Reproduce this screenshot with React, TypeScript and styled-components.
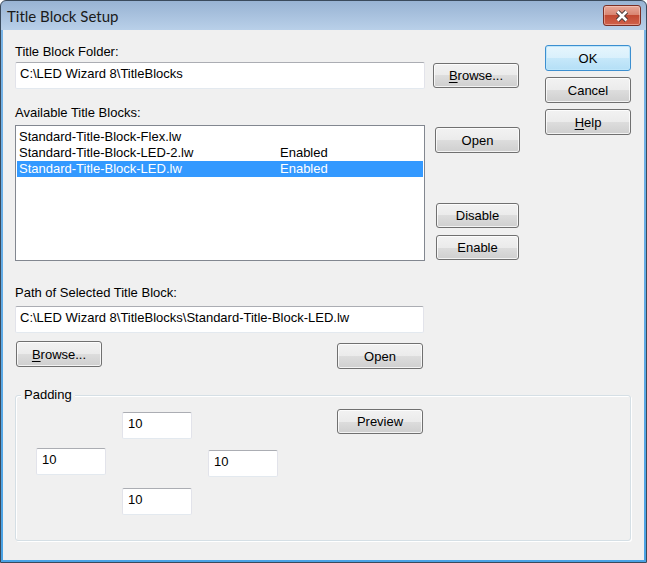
import React from "react";
import styled, { createGlobalStyle, css } from "styled-components";

const GlobalStyle = createGlobalStyle`
  html, body {
    margin: 0;
    padding: 0;
    background: #ffffff;
  }
  body {
    font-family: "Liberation Sans", Arial, sans-serif;
    font-size: 13px;
    color: #000;
  }
`;

const blocks = [
  { name: "Standard-Title-Block-Flex.lw", status: "" },
  { name: "Standard-Title-Block-LED-2.lw", status: "Enabled" },
  { name: "Standard-Title-Block-LED.lw", status: "Enabled", selected: true },
];

export default function App() {
  return (
    <>
      <GlobalStyle />
      <Window>
        <TitleBar>
          <Caption>Title Block Setup</Caption>
          <CloseButton aria-label="Close">
            <svg width="14" height="12" viewBox="0 0 14 12">
              <path d="M2.5 1.5 L11.5 10.5 M11.5 1.5 L2.5 10.5" stroke="#4b3b3a" strokeWidth="4.6" />
              <path d="M2.5 1.5 L11.5 10.5 M11.5 1.5 L2.5 10.5" stroke="#ffffff" strokeWidth="2.6" />
            </svg>
          </CloseButton>
        </TitleBar>

        <Client>
          <TopSection>
            <LeftColumn>
              <Label>Title Block Folder:</Label>
              <Row $mt={2}>
                <TextBox $w={410} readOnly value="C:\LED Wizard 8\TitleBlocks" />
                <Button $w={86} $h={25} $mt={1} $ml={8}>
                  <u>B</u>rowse...
                </Button>
              </Row>

              <Label $mt={16}>Available Title Blocks:</Label>
              <Row $mt={4}>
                <ListBox>
                  {blocks.map((b) => (
                    <ListItem key={b.name} $selected={!!b.selected}>
                      <span>{b.name}</span>
                      <span>{b.status}</span>
                    </ListItem>
                  ))}
                </ListBox>
                <ButtonColumn>
                  <Button $w={85} $h={26} $mt={2}>Open</Button>
                  <Button $w={83} $h={25} $mt={50} $ml={1}>Disable</Button>
                  <Button $w={83} $h={25} $mt={7} $ml={1}>Enable</Button>
                </ButtonColumn>
              </Row>

              <Label $mt={24}>Path of Selected Title Block:</Label>
              <Row $mt={5}>
                <TextBox
                  $w={409}
                  readOnly
                  value="C:\LED Wizard 8\TitleBlocks\Standard-Title-Block-LED.lw"
                />
              </Row>
              <Row $mt={8}>
                <Button $w={86} $h={26} $ml={1}>
                  <u>B</u>rowse...
                </Button>
                <Button $w={86} $h={26} $mt={2} $ml={235}>Open</Button>
              </Row>
            </LeftColumn>

            <RightColumn>
              <Button $w={86} $h={26} $default>OK</Button>
              <Button $w={86} $h={26}>Cancel</Button>
              <Button $w={86} $h={26}>
                <u>H</u>elp
              </Button>
            </RightColumn>
          </TopSection>

          <GroupBox>
            <GroupTitle>Padding</GroupTitle>
            <PaddingGrid>
              <PadBox $col={2} $row={1} $mt={3} readOnly value="10" />
              <PadBox $col={1} $row={2} readOnly value="10" />
              <PadBox $col={3} $row={2} $mt={2} readOnly value="10" />
              <PadBox $col={2} $row={3} readOnly value="10" />
              <PreviewCell>
                <Button $w={86} $h={25}>Preview</Button>
              </PreviewCell>
            </PaddingGrid>
          </GroupBox>
        </Client>
      </Window>
    </>
  );
}

const Window = styled.div`
  width: 647px;
  height: 563px;
  box-sizing: border-box;
  border: 1px solid #3a4a5c;
  border-radius: 6px 6px 0 0;
  background: linear-gradient(
    to bottom,
    #98b3d3 0px,
    #b9d0e9 29px,
    #79b4e6 29px,
    #4aa2e4 100%
  );
  display: flex;
  flex-direction: column;
  overflow: hidden;
`;

const TitleBar = styled.div`
  height: 29px;
  flex: none;
  display: flex;
  align-items: center;
  justify-content: space-between;
  padding: 0 5px 0 6px;
`;

const Caption = styled.div`
  font-family: Lato, "Liberation Sans", sans-serif;
  font-size: 15px;
  font-weight: 400;
  color: #1a1a1a;
`;

const CloseButton = styled.div`
  width: 38px;
  height: 21px;
  box-sizing: border-box;
  border: 1px solid #7a2f25;
  border-radius: 3px;
  background: linear-gradient(
    to bottom,
    #e8a899 0%,
    #d98672 45%,
    #c24a33 50%,
    #d0614a 100%
  );
  box-shadow: inset 0 0 0 1px rgba(255, 220, 210, 0.45);
  display: flex;
  align-items: center;
  justify-content: center;
`;

const Client = styled.div`
  flex: 1;
  margin: 0 2px 2px;
  background: #f0f0f0;
  padding: 14px 13px 0 12px;
`;

const TopSection = styled.div`
  display: flex;
  gap: 25px;
`;

const LeftColumn = styled.div`
  width: 505px;
  display: flex;
  flex-direction: column;
`;

const RightColumn = styled.div`
  margin-top: 1px;
  display: flex;
  flex-direction: column;
  gap: 6px;
`;

const Label = styled.div<{ $mt?: number }>`
  height: 16px;
  line-height: 16px;
  margin-top: ${(p) => p.$mt ?? 0}px;
  white-space: nowrap;
`;

const Row = styled.div<{ $mt?: number }>`
  display: flex;
  align-items: flex-start;
  margin-top: ${(p) => p.$mt ?? 0}px;
`;

const fieldBorder = css`
  box-sizing: border-box;
  border: 1px solid #e2e3ea;
  border-top-color: #abadb3;
  border-bottom-color: #e3e9ef;
  border-radius: 2px;
  background: #ffffff;
  font-family: "Liberation Sans", Arial, sans-serif;
  font-size: 13px;
  color: #000;
  outline: none;
  margin: 0;
`;

const TextBox = styled.input<{ $w: number }>`
  ${fieldBorder};
  width: ${(p) => p.$w}px;
  height: 27px;
  padding: 0 0 4px 4px;
`;

const Button = styled.div<{
  $w: number;
  $h: number;
  $mt?: number;
  $ml?: number;
  $default?: boolean;
}>`
  width: ${(p) => p.$w}px;
  height: ${(p) => p.$h}px;
  margin-top: ${(p) => p.$mt ?? 0}px;
  margin-left: ${(p) => p.$ml ?? 0}px;
  flex: none;
  box-sizing: border-box;
  border: 1px solid #707070;
  border-radius: 3px;
  background: linear-gradient(
    to bottom,
    #f2f2f2 0%,
    #ebebeb 50%,
    #dddddd 50%,
    #cfcfcf 100%
  );
  box-shadow: inset 0 0 0 1px rgba(255, 255, 255, 0.75);
  display: flex;
  align-items: center;
  justify-content: center;
  font-size: 13px;
  color: #000;
  cursor: default;

  ${(p) =>
    p.$default &&
    css`
      border-color: #3c8fd0;
      background: linear-gradient(
        to bottom,
        #e6f5fd 0%,
        #d9f0fc 50%,
        #c6e8fa 50%,
        #b4dff6 100%
      );
      box-shadow: inset 0 0 0 1px #bfe6fa;
    `}

  u {
    text-decoration: underline;
    text-underline-offset: 2px;
  }
`;

const ListBox = styled.div`
  width: 410px;
  height: 136px;
  box-sizing: border-box;
  border: 1px solid #828790;
  background: #ffffff;
  padding: 3px 1px 0;
`;

const ListItem = styled.div<{ $selected: boolean }>`
  height: 16px;
  line-height: 16px;
  padding-left: 2px;
  display: grid;
  grid-template-columns: 261px 1fr;
  white-space: nowrap;
  background: ${(p) => (p.$selected ? "#3399ff" : "transparent")};
  color: ${(p) => (p.$selected ? "#ffffff" : "#000000")};
`;

const ButtonColumn = styled.div`
  margin-left: 10px;
  display: flex;
  flex-direction: column;
`;

const GroupBox = styled.div`
  position: relative;
  margin-top: 26px;
  height: 146px;
  box-sizing: border-box;
  border: 1px solid #d5dfe5;
  border-radius: 3px;
  box-shadow: inset 1px 1px 0 #ffffff, 1px 1px 0 #ffffff;
  padding: 13px 0 0 20px;
`;

const GroupTitle = styled.span`
  position: absolute;
  top: -9px;
  left: 5px;
  padding: 0 3px;
  line-height: 16px;
  background: #f0f0f0;
`;

const PaddingGrid = styled.div`
  display: grid;
  grid-template-columns: 70px 70px 70px 86px;
  grid-template-rows: 39px 40px 27px;
  column-gap: 16px;
  align-items: start;
`;

const PadBox = styled.input<{ $col: number; $row: number; $mt?: number }>`
  ${fieldBorder};
  grid-column: ${(p) => p.$col};
  grid-row: ${(p) => p.$row};
  margin-top: ${(p) => p.$mt ?? 0}px;
  width: 70px;
  height: 27px;
  padding: 0 0 5px 5px;
`;

const PreviewCell = styled.div`
  grid-column: 4;
  grid-row: 1;
  margin-left: 43px;
`;
